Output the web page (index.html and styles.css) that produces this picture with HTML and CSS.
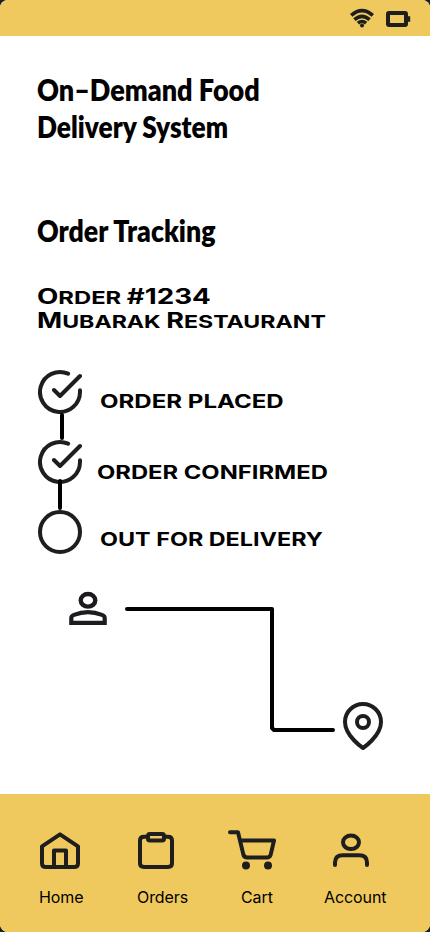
FILE: index.html
```html
<!DOCTYPE html>
<html lang="en">
<head>
<meta charset="utf-8">
<title>Order Tracking</title>
<link rel="stylesheet" href="styles.css">
</head>
<body>
<div class="screen">
  <header class="status">
    <svg width="24" height="20" viewBox="0 0 24 20" fill="none" stroke="#1e1e1e" stroke-width="3.6"><path d="M1.200 7.400Q12-2.200 22.800 7.400M4.400 11.600Q12 5 19.600 11.600M7.900 15.200Q12 11.800 16.100 15.200"/><circle cx="12" cy="17.500" r="2" fill="#1e1e1e" stroke="none"/></svg>
    <svg width="25" height="18" viewBox="0 0 25 18" fill="none" stroke="#1e1e1e"><rect x="2" y="4" width="18" height="12" rx="1" stroke-width="4"/><path d="M21 10h3.200" stroke-width="5.500"/></svg>
  </header>
  <main>
    <h1><span class="t1">On–Demand Food</span><span class="t2">Delivery System</span></h1>
    <h2><span class="t3">Order Tracking</span></h2>
    <div class="order">
      <span class="o1"><b>O</b>rder <b>#1234</b></span>
      <span class="o2"><b>M</b>ubarak <b>R</b>estaurant</span>
    </div>
    <ol class="steps">
      <li class="placed"><svg width="48" height="48" viewBox="0 0 48 48"><path d="M44 22.2V24A20 20 0 1 1 32.1 5.7M44 8 24 28l-6-6"/></svg><span class="s1">ORDER PLACED</span></li>
      <li class="confirmed"><svg width="48" height="48" viewBox="0 0 48 48"><path d="M44 22.2V24A20 20 0 1 1 32.1 5.7M44 8 24 28l-6-6"/></svg><span class="s2">ORDER CONFIRMED</span></li>
      <li class="delivery"><svg width="48" height="48" viewBox="0 0 48 48"><circle cx="24" cy="24" r="20"/></svg><span class="s3">OUT FOR DELIVERY</span></li>
    </ol>
    <svg class="route" width="350" height="180" viewBox="55 580 350 180" fill="none" stroke-width="4">
      <g stroke="#1d1b20"><ellipse cx="88" cy="600.3" rx="7.3" ry="6.3" stroke-width="4.4"/><path d="M71.3 622.9V618Q71.3 616 74 614.9Q88 609.5 102 614.9Q104.7 616 104.7 618V622.9Z" stroke-width="4.2"/></g>
      <path d="M127 609H272V728L274 730H333" stroke="#000" stroke-linecap="round" stroke-linejoin="round"/>
      <g stroke="#1e1e1e" stroke-linejoin="round"><path d="M381 722C381 736 363 748 363 748S345 736 345 722A18 18 0 0 1 381 722Z"/><circle cx="363" cy="722" r="6"/></g>
    </svg>
  </main>
  <nav>
    <a class="home"><svg width="40" height="40" viewBox="40 830 40 40"><path d="M42 846.3 60 834.3 78 846.3V863.5Q78 867 74 867H46Q42 867 42 863.5ZM54 867V850.5H66V867"/></svg><span>Home</span></a>
    <a class="orders"><svg width="40" height="40" viewBox="136 830 40 40"><path d="M164 836.8h4Q172 836.8 172 840.5V863.3Q172 867 168 867H144Q140 867 140 863.3V840.5Q140 836.8 144 836.8h4"/><rect x="148" y="834" width="16" height="6.5" rx="1.8"/></svg><span>Orders</span></a>
    <a class="cart"><svg width="48" height="40" viewBox="228 830 48 40"><path d="M230 832.2h8l5.4 22.4Q244.2 857.5 247.3 857.5H266.7Q270 857.5 270.7 854.6L274 840.5H240"/><circle cx="246" cy="865.5" r="2"/><circle cx="268" cy="865.5" r="2"/></svg><span>Cart</span></a>
    <a class="account"><svg width="40" height="40" viewBox="331 830 40 40"><path d="M335 865V862.5Q335 855.3 343 855.3H359Q367 855.3 367 862.5V865"/><ellipse cx="351" cy="842.3" rx="8" ry="6.8"/></svg><span>Account</span></a>
  </nav>
</div>
</body>
</html>
```
FILE: styles.css
```css
* { box-sizing: border-box; }
body { margin: 0; background: #1e1e1e; color: #000; }
.screen { width: 430px; height: 932px; border-radius: 8px; overflow: hidden; background: #fff; display: flex; flex-direction: column; }
.status { height: 36px; background: #efc95d; display: flex; justify-content: flex-end; align-items: center; gap: 12px; padding: 0 19px 0 0; }
main { flex: 1; min-height: 0; }
main span { transform-origin: 0 50%; white-space: nowrap; }
h1, h2 { margin: 0 0 0 37px; font: 800 30px/37px Lato, sans-serif; }
h1 { padding-top: 35px; }
h1 span, h2 span { display: block; width: max-content; }
h2 { margin-top: 67px; }
.t1 { transform: scaleX(.9); }
.t2 { transform: scaleX(.875); }
.t3 { transform: scaleX(.89); }
.order { margin: 37px 0 0 37px; font: 700 18px/24px Inter, "Liberation Sans", sans-serif; text-transform: uppercase; }
.order b { font-size: 21px; font-weight: 700; line-height: 20px; }
.order span { display: block; width: max-content; }
.o1 { transform: scaleX(1.32); }
.o2 { transform: scaleX(1.285); }
.steps { list-style: none; margin: 34px 0 0 36px; padding: 0; height: 210px; font: 700 18.5px/24px Inter, "Liberation Sans", sans-serif; }
.steps li { height: 70px; display: flex; align-items: flex-start; position: relative; }
.steps svg { fill: none; stroke: #1e1e1e; stroke-width: 4; stroke-linecap: round; stroke-linejoin: round; }
.steps span { margin: 21px 0 0 16px; }
.steps .s1 { transform: scaleX(1.3); }
.steps .s2 { margin-left: 13px; margin-top: 22px; transform: scaleX(1.285); }
.steps .s3 { margin-top: 19px; transform: scaleX(1.262); }
.placed::after, .confirmed::after { content: ""; position: absolute; width: 4px; border-radius: 2px; background: #000; }
.placed::after { left: 24px; top: 45px; height: 27px; }
.confirmed::after { left: 22px; top: 41px; height: 31px; }
.route { display: block; margin: 2px 0 0 55px; }
nav { height: 138px; background: #efc95d; display: flex; align-items: flex-start; padding: 36px 0 0 39px; font: 16px/20px Inter, sans-serif; }
nav a { display: flex; flex-direction: column; }
nav svg { fill: none; stroke: #1e1e1e; stroke-width: 4; stroke-linecap: round; stroke-linejoin: round; }
nav span { margin-top: 17px; letter-spacing: -.08px; }
.home { width: 98px; }
.home svg { margin-left: 1px; }
.orders { width: 91px; }
.orders svg { margin-left: -1px; }
.cart { width: 96px; }
.cart span { margin-left: 13px; }
.account svg { margin-left: 7px; }
```
